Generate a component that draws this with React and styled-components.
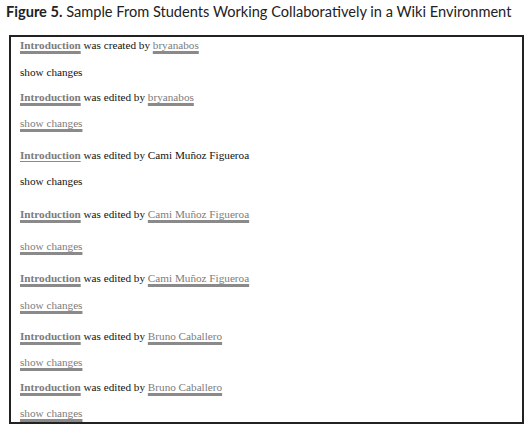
import React from "react";
import styled, { createGlobalStyle } from "styled-components";

const Global = createGlobalStyle`
  html, body { margin: 0; padding: 0; background: #fff; }
  body { width: 530px; height: 434px; overflow: hidden; }
`;

const Page = styled.div`
  padding: 3px 0 0 6px;
`;

const Title = styled.h1`
  margin: 0;
  font-family: "Lato", "Open Sans", sans-serif;
  font-size: 14.6px;
  font-weight: 400;
  color: #222;
  line-height: 18px;
  white-space: nowrap;
  b { font-weight: 700; }
`;

const Frame = styled.div`
  margin: 14px 0 0 3px;
  width: 502px;
  height: 385px;
  border: 2px solid #222;
  padding: 0 0 0 9px;
  box-sizing: content-box;
  font-family: "Liberation Serif", "Times New Roman", serif;
  font-size: 11.2px;
  color: #111;
`;

const Row = styled.div`
  height: 14px;
  line-height: 14px;
  margin-top: ${(p) => p.$top}px;
  white-space: nowrap;
`;

const Link = styled.span`
  color: #7c7c7c;
  font-weight: ${(p) => (p.$bold ? 700 : 400)};
  text-decoration: underline;
  text-decoration-color: #8a8a8a;
  text-decoration-thickness: ${(p) => (p.$thin ? 1 : 2.5)}px;
  text-underline-offset: 2px;
`;

const entries = [
  { type: "edit", verb: "created", user: "bryanabos", userLink: true, top: 1 },
  { type: "show", link: false, top: 13 },
  { type: "edit", verb: "edited", user: "bryanabos", userLink: true, top: 11 },
  { type: "show", link: true, top: 12 },
  { type: "edit", verb: "edited", user: "Cami Muñoz Figueroa", userLink: false, thin: true, top: 18 },
  { type: "show", link: false, top: 12 },
  { type: "edit", verb: "edited", user: "Cami Muñoz Figueroa", userLink: true, top: 19 },
  { type: "show", link: true, top: 18 },
  { type: "edit", verb: "edited", user: "Cami Muñoz Figueroa", userLink: true, top: 18 },
  { type: "show", link: true, top: 13 },
  { type: "edit", verb: "edited", user: "Bruno Caballero", userLink: true, top: 17 },
  { type: "show", link: true, top: 12 },
  { type: "edit", verb: "edited", user: "Bruno Caballero", userLink: true, top: 11 },
  { type: "show", link: true, top: 12 },
];

export default function App() {
  return (
    <>
      <Global />
      <Page>
        <Title>
          <b>Figure 5.</b> Sample From Students Working Collaboratively in a Wiki Environment
        </Title>
        <Frame>
          {entries.map((e, i) =>
            e.type === "edit" ? (
              <Row key={i} $top={e.top}>
                <Link $bold $thin={e.thin}>Introduction</Link> was {e.verb} by{" "}
                {e.userLink ? <Link>{e.user}</Link> : e.user}
              </Row>
            ) : (
              <Row key={i} $top={e.top}>
                {e.link ? <Link>show changes</Link> : "show changes"}
              </Row>
            )
          )}
        </Frame>
      </Page>
    </>
  );
}
